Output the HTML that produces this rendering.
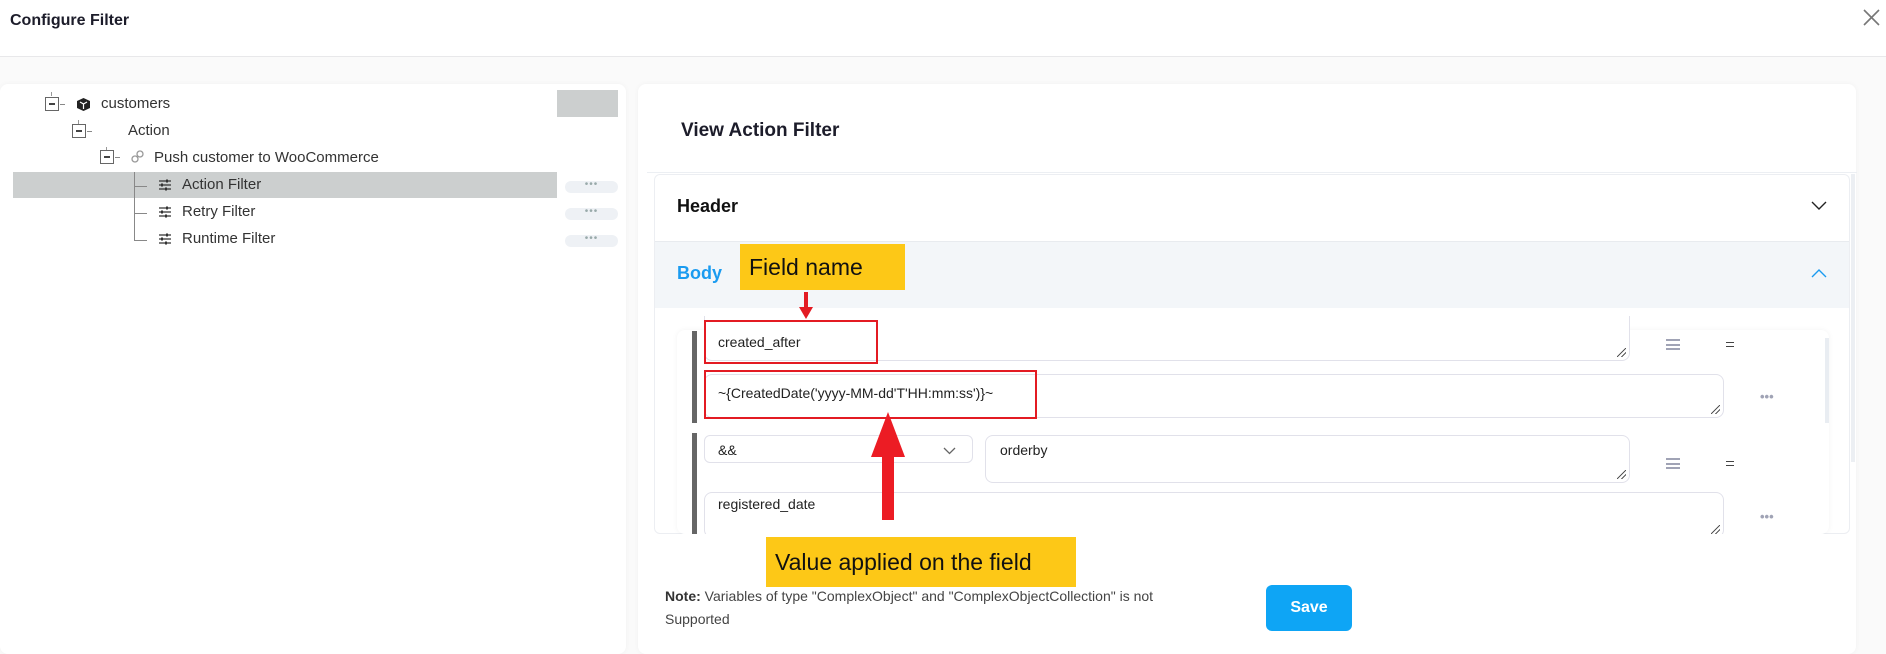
<!DOCTYPE html>
<html><head><meta charset="utf-8"><style>
*{box-sizing:border-box;margin:0;padding:0}
body{width:1886px;height:646px;overflow:hidden;background:#fafafa;font-family:"Liberation Sans",sans-serif;color:#222;position:relative}
.abs{position:absolute}
.top{left:0;top:0;width:1886px;height:57px;background:#fff;border-bottom:1px solid #e8e8ea}
.panel{background:#fff;border-radius:8px;box-shadow:0 0 6px rgba(0,0,0,.04)}
.t{font-size:15px;color:#333;white-space:nowrap}
.box{width:14px;height:14px;border:1px solid #666;background:#fff}
.box:after{content:"";position:absolute;left:3px;top:5px;width:6px;height:1.5px;background:#444}
.pill{width:53px;height:12px;border-radius:6px;background:#eef1f5;font-size:10px;color:#9aa;text-align:center;line-height:8px;letter-spacing:1px}
.ta{border:1px solid #e1e1ea;border-radius:8px;background:#fff}
.ta:after{content:"";position:absolute;right:3px;bottom:3px;width:9px;height:9px;background:linear-gradient(135deg,transparent 45%,#555 45%,#555 55%,transparent 55%,transparent 70%,#555 70%,#555 80%,transparent 80%)}
.in{font-size:14px;color:#222}
.yel{background:#fdc817;font-size:23px;color:#111;padding-left:9px;display:flex;align-items:center}
.red{border:2px solid #e31b23}
.menu{width:14px;height:11px;border-top:2px solid #a0a3b5;border-bottom:2px solid #a0a3b5}
.menu:after{content:"";position:absolute;left:0;top:2.5px;width:14px;height:2px;background:#a0a3b5}
.dots{font-size:13px;color:#a0a3b5;font-weight:bold}
</style></head><body>
<div class="abs top"></div>
<div class="abs" style="left:10px;top:12px;font-size:16px;font-weight:bold;color:#1c1c2a">Configure Filter</div>
<svg class="abs" style="left:1863px;top:9px" width="17" height="17"><path d="M1 1L16 16M16 1L1 16" stroke="#777" stroke-width="1.6"/></svg>

<div class="abs panel" style="left:0;top:84px;width:626px;height:570px"></div>
<div class="abs panel" style="left:638px;top:84px;width:1218px;height:570px"></div>

<div class="abs" style="left:557px;top:90px;width:61px;height:27px;background:#cccfcf"></div>
<div class="abs" style="left:13px;top:172px;width:544px;height:26px;background:#cccfcf"></div>
<div class="abs" style="left:51px;top:92px;width:1px;height:4px;background:#999"></div>
<div class="abs box" style="left:45px;top:97px"></div><div class="abs" style="left:60px;top:104px;width:5px;height:1px;background:#888"></div>
<svg class="abs" style="left:76px;top:97px" width="15" height="15"><path d="M7.5 1L14 4V11L7.5 14L1 11V4Z" fill="#222"/><path d="M4 5L7.5 7V12M11 5L7.5 7" stroke="#fff" stroke-width="1.2" fill="none"/></svg>
<div class="abs t" style="left:101px;top:95px">customers</div>
<div class="abs" style="left:78px;top:120px;width:1px;height:4px;background:#999"></div>
<div class="abs box" style="left:72px;top:124px"></div><div class="abs" style="left:87px;top:131px;width:5px;height:1px;background:#888"></div>
<div class="abs t" style="left:128px;top:122px">Action</div>
<div class="abs" style="left:106px;top:147px;width:1px;height:4px;background:#999"></div>
<div class="abs box" style="left:100px;top:150px"></div><div class="abs" style="left:115px;top:157px;width:5px;height:1px;background:#888"></div>
<svg class="abs" style="left:130px;top:149px" width="15" height="15"><circle cx="5" cy="10" r="3" stroke="#999" fill="none" stroke-width="1.3"/><circle cx="10" cy="5" r="3" stroke="#999" fill="none" stroke-width="1.3"/></svg>
<div class="abs t" style="left:154px;top:149px">Push customer to WooCommerce</div>
<div class="abs" style="left:134px;top:172px;width:1px;height:69px;background:#888"></div>
<div class="abs" style="left:134px;top:186px;width:13px;height:1px;background:#888"></div>
<div class="abs" style="left:134px;top:213px;width:13px;height:1px;background:#888"></div>
<div class="abs" style="left:134px;top:240px;width:13px;height:1px;background:#888"></div>
<svg class="abs" style="left:158px;top:178px" width="14" height="14"><path d="M1 3H13M1 7H13M1 11H13" stroke="#333" stroke-width="1.3"/><rect x="8" y="1.5" width="2" height="3" fill="#333"/><rect x="3" y="5.5" width="2" height="3" fill="#333"/><rect x="7" y="9.5" width="2" height="3" fill="#333"/></svg>
<div class="abs t" style="left:182px;top:176px">Action Filter</div>
<svg class="abs" style="left:158px;top:205px" width="14" height="14"><path d="M1 3H13M1 7H13M1 11H13" stroke="#333" stroke-width="1.3"/><rect x="8" y="1.5" width="2" height="3" fill="#333"/><rect x="3" y="5.5" width="2" height="3" fill="#333"/><rect x="7" y="9.5" width="2" height="3" fill="#333"/></svg>
<div class="abs t" style="left:182px;top:203px">Retry Filter</div>
<svg class="abs" style="left:158px;top:232px" width="14" height="14"><path d="M1 3H13M1 7H13M1 11H13" stroke="#333" stroke-width="1.3"/><rect x="8" y="1.5" width="2" height="3" fill="#333"/><rect x="3" y="5.5" width="2" height="3" fill="#333"/><rect x="7" y="9.5" width="2" height="3" fill="#333"/></svg>
<div class="abs t" style="left:182px;top:230px">Runtime Filter</div>
<div class="abs pill" style="left:565px;top:181px">•••</div>
<div class="abs pill" style="left:565px;top:208px">•••</div>
<div class="abs pill" style="left:565px;top:235px">•••</div>

<div class="abs" style="left:681px;top:120px;font-size:19px;font-weight:bold;color:#1c1c2a">View Action Filter</div>
<div class="abs" style="left:647px;top:172px;width:1210px;height:1px;background:#eceff3"></div>
<div class="abs" style="left:654px;top:174px;width:1196px;height:360px;background:#fff;border:1px solid #eceef2;border-radius:6px"></div>
<div class="abs" style="left:1851px;top:174px;width:4px;height:288px;background:#eceff3"></div>
<div class="abs" style="left:677px;top:196px;font-size:18px;font-weight:bold;color:#111">Header</div>
<svg class="abs" style="left:1811px;top:201px" width="16" height="10"><path d="M1 1L8 8L15 1" stroke="#222" stroke-width="1.4" fill="none"/></svg>
<div class="abs" style="left:655px;top:241px;width:1194px;height:67px;background:#f3f6f9;border-top:1px solid #e8ebef"></div>
<div class="abs" style="left:677px;top:263px;font-size:18px;font-weight:bold;color:#1a9bf0">Body</div>
<svg class="abs" style="left:1811px;top:268px" width="16" height="10"><path d="M1 9L8 2L15 9" stroke="#1a9bf0" stroke-width="1.4" fill="none"/></svg>

<div class="abs" style="left:677px;top:330px;width:1152px;height:204px;background:#fff;border-radius:8px;box-shadow:0 0 6px rgba(0,0,0,.05)"></div>
<div class="abs" style="left:1825px;top:338px;width:4px;height:85px;background:#e9edf2"></div>
<div class="abs" style="left:692px;top:331px;width:5px;height:92px;background:#666"></div>
<div class="abs" style="left:692px;top:433px;width:5px;height:101px;background:#666"></div>

<div class="abs ta" style="left:704px;top:316px;width:926px;height:45px;border-top:none;border-radius:0 0 8px 8px"></div>
<div class="abs in" style="left:718px;top:334px">created_after</div>
<div class="abs menu" style="left:1666px;top:339px"></div>
<div class="abs" style="left:1726px;top:342px;width:8px;height:5px;border-top:1.5px solid #444;border-bottom:1.5px solid #444"></div>
<div class="abs ta" style="left:704px;top:374px;width:1020px;height:44px"></div>
<div class="abs in" style="left:718px;top:385px">~{CreatedDate('yyyy-MM-dd'T'HH:mm:ss')}~</div>
<div class="abs dots" style="left:1760px;top:389px">•••</div>

<div class="abs" style="left:704px;top:435px;width:269px;height:28px;border:1px solid #e1e1ea;border-radius:6px;background:#fff"></div>
<div class="abs in" style="left:718px;top:442px">&amp;&amp;</div>
<svg class="abs" style="left:943px;top:447px" width="13" height="8"><path d="M1 1L6.5 6.5L12 1" stroke="#666" stroke-width="1.3" fill="none"/></svg>
<div class="abs ta" style="left:985px;top:435px;width:645px;height:48px"></div>
<div class="abs in" style="left:1000px;top:442px">orderby</div>
<div class="abs menu" style="left:1666px;top:458px"></div>
<div class="abs" style="left:1726px;top:461px;width:8px;height:5px;border-top:1.5px solid #444;border-bottom:1.5px solid #444"></div>
<div class="abs ta" style="left:704px;top:492px;width:1020px;height:46px"></div>
<div class="abs in" style="left:718px;top:496px">registered_date</div>
<div class="abs dots" style="left:1760px;top:509px">•••</div>
<div class="abs" style="left:650px;top:534px;width:1206px;height:112px;background:#fff"></div>

<div class="abs red" style="left:704px;top:320px;width:174px;height:44px"></div>
<div class="abs red" style="left:704px;top:370px;width:333px;height:49px"></div>
<div class="abs yel" style="left:740px;top:244px;width:165px;height:46px">Field name</div>
<svg class="abs" style="left:799px;top:292px" width="14" height="28"><rect x="5" y="0" width="4" height="17" fill="#e31b23"/><path d="M0 15H14L7 27Z" fill="#e31b23"/></svg>
<svg class="abs" style="left:870px;top:412px" width="36" height="110"><path d="M18 0L35 45H24V108H12V45H1Z" fill="#ec1c24"/></svg>
<div class="abs yel" style="left:766px;top:537px;width:310px;height:50px">Value applied on the field</div>

<div class="abs" style="left:665px;top:585px;font-size:14px;color:#444;line-height:23px;width:530px"><b style="color:#333">Note:</b> Variables of type "ComplexObject" and "ComplexObjectCollection" is not<br>Supported</div>
<div class="abs" style="left:1266px;top:585px;width:86px;height:46px;background:#0ea5f5;border-radius:6px;color:#fff;font-weight:bold;font-size:16px;text-align:center;line-height:46px">Save</div>
</body></html>
